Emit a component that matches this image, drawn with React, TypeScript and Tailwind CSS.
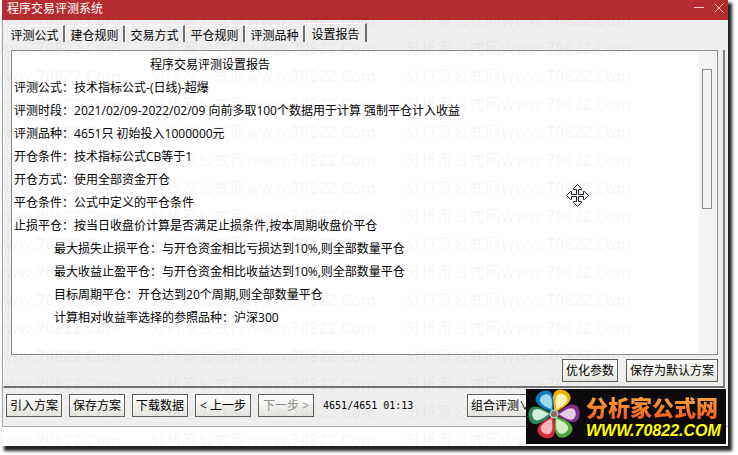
import { useState } from "react";

const TABS = ["评测公式", "建仓规则", "交易方式", "平仓规则", "评测品种", "设置报告"];

const REPORT = [
  { label: "评测公式", value: "技术指标公式-(日线)-超爆" },
  { label: "评测时段", value: "2021/02/09-2022/02/09 向前多取100个数据用于计算 强制平仓计入收益" },
  { label: "评测品种", value: "4651只 初始投入1000000元" },
  { label: "开仓条件", value: "技术指标公式CB等于1" },
  { label: "开仓方式", value: "使用全部资金开仓" },
  { label: "平仓条件", value: "公式中定义的平仓条件" },
  { label: "止损平仓", value: "按当日收盘价计算是否满足止损条件,按本周期收盘价平仓" },
  { label: "最大损失止损平仓", value: "与开仓资金相比亏损达到10%,则全部数量平仓", nested: true },
  { label: "最大收益止盈平仓", value: "与开仓资金相比收益达到10%,则全部数量平仓", nested: true },
  { label: "目标周期平仓", value: "开仓达到20个周期,则全部数量平仓", nested: true },
  { label: "计算相对收益率选择的参照品种", value: "沪深300", nested: true },
];

const PETALS = [
  { angle: 25, outer: "#f0b400", inner: "#fdf3b8" },
  { angle: 88, outer: "#7d2d8a", inner: "#e6cdec" },
  { angle: 148, outer: "#55a83c", inner: "#d3edc4" },
  { angle: 205, outer: "#dc2a3c", inner: "#fab4ba" },
  { angle: 266, outer: "#2c8458", inner: "#d2ecdc" },
  { angle: 328, outer: "#1078bc", inner: "#9fdaf4" },
];

function WinButton({ children, disabled }: { children: string; disabled?: boolean }) {
  return (
    <button
      type="button"
      disabled={disabled}
      className="h-[23px] min-w-14 shrink-0 whitespace-pre border border-[#606060] bg-linear-to-b from-white to-[#e6e5df] px-[3px] text-xs leading-5 text-black disabled:text-[#8c8c8c]"
    >
      {children}
    </button>
  );
}

function TitleBar() {
  return (
    <header className="flex h-5 items-start justify-between bg-[#b52b2f] pl-[5px] text-white">
      <h1 className="text-xs leading-[18px]">程序交易评测系统</h1>
      <div className="flex gap-2.5 pr-1">
        <button type="button" aria-label="最小化" className="h-4">
          <svg width="10" height="10" viewBox="0 0 10 10" fill="none" stroke="#f3c9ca">
            <path d="M0 4.5h10" />
          </svg>
        </button>
        <button type="button" aria-label="关闭" className="h-4">
          <svg width="10" height="10" viewBox="0 0 10 10" fill="none" stroke="#f3c9ca">
            <path d="M.5.5l9 9M9.5.5l-9 9" />
          </svg>
        </button>
      </div>
    </header>
  );
}

function MoveCursor() {
  return (
    <svg className="absolute top-[133px] left-[554px]" width="23" height="23" viewBox="0 0 23 23" fill="#fff" stroke="#1d1d28">
      <path d="M11.5.5l4 4v1h-3v5h5v-3h1l4 4-4 4h-1v-3h-5v5h3v1l-4 4-4-4v-1h3v-5h-5v3h-1l-4-4 4-4h1v3h5v-5h-3v-1z" />
    </svg>
  );
}

function Watermark() {
  return (
    <div aria-hidden className="pointer-events-none absolute inset-0 overflow-hidden pt-1.5 font-['Noto_Sans','Noto_Sans_CJK_SC',sans-serif] text-base leading-7 font-bold text-[#000000]/3">
      {Array.from({ length: 16 }, (_, row) => (
        <div key={row} className="-ml-[105px] flex h-7 items-center whitespace-nowrap">
          {[0, 1, 2].map((col) => (
            <span key={col} className="w-[255px] shrink-0">
              分析家公式网www.70822.Com
            </span>
          ))}
        </div>
      ))}
    </div>
  );
}

function SiteLogo() {
  return (
    <div className="absolute right-0.5 bottom-0.5 z-10 flex h-[55px] w-[200px] items-center bg-[#0c0a0c]">
      <svg width="56" height="55" viewBox="0 0 56 55" className="shrink-0">
        {PETALS.map((petal) => (
          <g key={petal.angle} transform={`rotate(${petal.angle} 28 25)`}>
            <path d="M28 23C23 17 17 8 20 3C23-2 33-2 36 3C39 8 33 17 28 23Z" fill={petal.outer} />
            <path d="M28.500 20C25 15 21 9 23.500 5.500C25.500 2.500 31.500 2.500 33.500 5.500C36 9 32 15 28.500 20Z" fill={petal.inner} />
          </g>
        ))}
        <circle cx="28" cy="25" r="4.500" fill="#b9c4c0" />
        <circle cx="28" cy="25" r="3" fill="#6d7478" />
        <circle cx="28.500" cy="25" r="1.500" fill="#d8492f" />
      </svg>
      <div className="flex flex-col pl-1 whitespace-nowrap">
        <span className="bg-linear-to-b from-[#ffae3c] to-[#f0521a] bg-clip-text text-[22px] leading-7 font-black text-transparent">
          分析家公式网
        </span>
        <a
          href="#"
          className="font-['Liberation_Sans',sans-serif] text-base leading-5 font-bold text-[#ffff00] italic"
        >
          WWW.70822.COM
        </a>
      </div>
    </div>
  );
}

export default function App() {
  const [activeTab, setActiveTab] = useState(5);

  return (
    <div className="bg-white pr-[10px] pb-[9px] pl-[2px] font-['Open_Sans','Noto_Sans_CJK_SC',sans-serif] text-xs text-black">
      <div className="relative bg-white pb-[19px] shadow-[3px_4px_3px_1px_#222]">
        <TitleBar />

        <main className="border-b border-l border-[#a8a8a8] bg-[#efefef]">
          <div role="tablist" className="flex h-[26px] items-start pt-[3px] pl-0.5">
            {TABS.map((tab, i) => (
              <button
                key={tab}
                type="button"
                role="tab"
                aria-selected={activeTab === i}
                onClick={() => setActiveTab(i)}
                className={
                  activeTab === i
                    ? "h-[19px] w-[62px] border-t border-r-2 border-l border-t-white border-r-[#707070] border-l-white text-xs leading-[22px]"
                    : "mt-0.5 h-[17px] w-[60px] border-t border-r-2 border-l border-t-white border-r-[#707070] border-l-white pt-1 text-xs leading-3"
                }
              >
                {tab}
              </button>
            ))}
          </div>

          <section className="mr-[3px] border-r-2 border-b-2 border-l border-r-[#808080] border-b-[#707070] border-l-white pr-[5px] pb-1 pl-[7px]">
            <div className="mt-1 flex h-[305px] border border-[#8c8c8c] bg-white">
              <div className="relative grow pt-0.5 pl-0.5 leading-[23px]">
                <h2 className="pl-[136px]">程序交易评测设置报告</h2>
                {REPORT.map((line) => (
                  <p key={line.label} className={line.nested ? "pl-10" : ""}>
                    {line.label}：{line.value}
                  </p>
                ))}
                <MoveCursor />
              </div>
              <div className="my-px mr-px w-[17px] bg-[#f4f3f1] pt-[17px] pl-[3px]">
                <div className="h-[140px] w-[10px] border border-[#8c8c8c]" />
              </div>
            </div>
            <div className="mt-1 flex justify-end gap-2">
              <WinButton>优化参数</WinButton>
              <WinButton>保存为默认方案</WinButton>
            </div>
          </section>

          <footer className="flex items-center gap-[7px] pt-1.5 pb-[9px] pl-[3px]">
            <WinButton>引入方案</WinButton>
            <WinButton>保存方案</WinButton>
            <WinButton>下载数据</WinButton>
            <WinButton>{"< 上一步"}</WinButton>
            <WinButton disabled>{"下一步 >"}</WinButton>
            <span className="grow pl-0.5 font-['DejaVu_Sans_Mono',monospace] text-[10px]">4651/4651 01:13</span>
            <div className="mr-[193px]">
              <WinButton>组合评测∨</WinButton>
            </div>
          </footer>
        </main>

        <SiteLogo />
      </div>
      <Watermark />
    </div>
  );
}
